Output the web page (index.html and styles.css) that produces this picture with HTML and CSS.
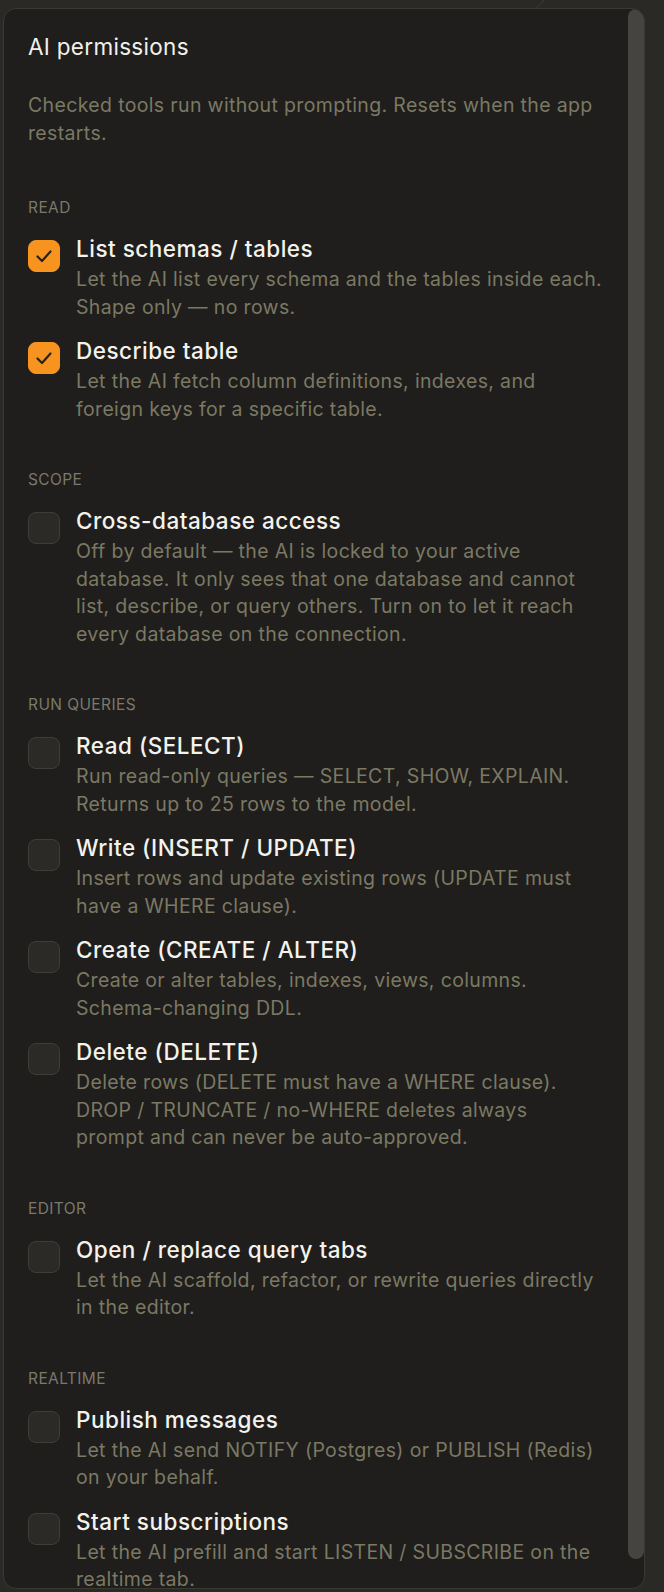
FILE: index.html
```html
<!DOCTYPE html>
<html lang="en">
    <head>
        <meta charset="UTF-8" />
        <meta name="viewport" content="width=device-width, initial-scale=1.0" />
        <title>AI permissions</title>
        <link rel="stylesheet" href="styles.css">
    </head>
    <body>
        <div class="backdrop">
            <div class="arc"></div>
            <section class="panel">
                <div class="thumb"></div>
                <div class="content">
                    <h1 class="title">AI permissions</h1>
                    <p class="intro">Checked tools run without prompting. Resets when the app restarts.</p>

                    <div class="group">
                        <h2 class="group-name">Read</h2>
                        <label class="perm">
                            <input type="checkbox" checked />
                            <span class="box"><svg viewBox="0 0 32 32"><polyline points="9.5,16.5 14,21 22.5,11.5" /></svg></span>
                            <span class="text">
                                <span class="name">List schemas / tables</span>
                                <span class="desc">Let the AI list every schema and the tables inside each. Shape only — no rows.</span>
                            </span>
                        </label>
                        <label class="perm">
                            <input type="checkbox" checked />
                            <span class="box"><svg viewBox="0 0 32 32"><polyline points="9.5,16.5 14,21 22.5,11.5" /></svg></span>
                            <span class="text">
                                <span class="name">Describe table</span>
                                <span class="desc">Let the AI fetch column definitions, indexes, and foreign keys for a specific table.</span>
                            </span>
                        </label>
                    </div>

                    <div class="group">
                        <h2 class="group-name">Scope</h2>
                        <label class="perm">
                            <input type="checkbox" />
                            <span class="box"></span>
                            <span class="text">
                                <span class="name">Cross-database access</span>
                                <span class="desc">Off by default — the AI is locked to your active database. It only sees that one database and cannot list, describe, or query others. Turn on to let it reach every database on the connection.</span>
                            </span>
                        </label>
                    </div>

                    <div class="group">
                        <h2 class="group-name">Run queries</h2>
                        <label class="perm">
                            <input type="checkbox" />
                            <span class="box"></span>
                            <span class="text">
                                <span class="name">Read (SELECT)</span>
                                <span class="desc">Run read-only queries — SELECT, SHOW, EXPLAIN. Returns up to 25 rows to the model.</span>
                            </span>
                        </label>
                        <label class="perm">
                            <input type="checkbox" />
                            <span class="box"></span>
                            <span class="text">
                                <span class="name">Write (INSERT / UPDATE)</span>
                                <span class="desc">Insert rows and update existing rows (UPDATE must have a WHERE clause).</span>
                            </span>
                        </label>
                        <label class="perm">
                            <input type="checkbox" />
                            <span class="box"></span>
                            <span class="text">
                                <span class="name">Create (CREATE / ALTER)</span>
                                <span class="desc">Create or alter tables, indexes, views, columns. Schema-changing DDL.</span>
                            </span>
                        </label>
                        <label class="perm">
                            <input type="checkbox" />
                            <span class="box"></span>
                            <span class="text">
                                <span class="name">Delete (DELETE)</span>
                                <span class="desc">Delete rows (DELETE must have a WHERE clause). DROP / TRUNCATE / no-WHERE deletes always prompt&nbsp;and can never be auto-approved.</span>
                            </span>
                        </label>
                    </div>

                    <div class="group">
                        <h2 class="group-name">Editor</h2>
                        <label class="perm">
                            <input type="checkbox" />
                            <span class="box"></span>
                            <span class="text">
                                <span class="name">Open / replace query tabs</span>
                                <span class="desc">Let the AI scaffold, refactor, or rewrite queries directly in the editor.</span>
                            </span>
                        </label>
                    </div>

                    <div class="group">
                        <h2 class="group-name">Realtime</h2>
                        <label class="perm">
                            <input type="checkbox" />
                            <span class="box"></span>
                            <span class="text">
                                <span class="name">Publish messages</span>
                                <span class="desc">Let the AI send NOTIFY (Postgres) or PUBLISH (Redis) on your behalf.</span>
                            </span>
                        </label>
                        <label class="perm">
                            <input type="checkbox" />
                            <span class="box"></span>
                            <span class="text">
                                <span class="name">Start subscriptions</span>
                                <span class="desc">Let the AI prefill and start LISTEN / SUBSCRIBE on the realtime tab.</span>
                            </span>
                        </label>
                    </div>
                </div>
            </section>
        </div>
    </body>
</html>
```

FILE: styles.css
```css
* {
    margin: 0;
    padding: 0;
    box-sizing: border-box;
}

body {
    background: #2a2925;
    font-family: Inter, "Noto Sans", sans-serif;
    overflow: hidden;
}

.backdrop {
    position: relative;
    height: 100vh;
    padding: 8px 19px 0 3px;
}

/* faint edge of something behind the popover */
.arc {
    position: absolute;
    top: -40px;
    left: 380px;
    width: 180px;
    height: 60px;
    border-right: 1px solid #4a4943;
    border-radius: 0 0 60px 0;
}

.panel {
    position: relative;
    height: 1581px;
    background: #1f1e1c;
    border: 1px solid #3a3934;
    border-radius: 13px;
    overflow: hidden;
}

.thumb {
    position: absolute;
    top: 0;
    right: 0;
    width: 16px;
    height: 1550px;
    background: #454440;
    border-radius: 8px;
}

.content {
    padding: 26px 38px 0 24px;
}

.title {
    font-size: 22.5px;
    font-weight: 400;
    line-height: 24px;
    letter-spacing: 0.3px;
    color: #f1f0ea;
}

.intro {
    margin-top: 33px;
    font-size: 19.5px;
    line-height: 27.5px;
    letter-spacing: 0.35px;
    color: #7b7963;
}

.group {
    margin-top: 47px;

    &:first-of-type {
        margin-top: 51px;
    }
}

.group-name {
    font-size: 15.5px;
    font-weight: 400;
    line-height: 20px;
    letter-spacing: 0.4px;
    text-transform: uppercase;
    color: #7a796b;
    margin-bottom: 17px;
}

.perm {
    display: flex;
    gap: 16px;
    align-items: flex-start;

    & + .perm {
        margin-top: 16px;
    }

    input {
        display: none;
    }

    .box {
        flex: none;
        width: 32px;
        height: 32px;
        margin-top: 5px;
        border-radius: 8px;
        background: #2b2a27;
        border: 1px solid #3e3d38;
    }

    input:checked + .box {
        background: #f7931f;
        border-color: #f7931f;
    }

    svg {
        display: block;
        margin: -1px;
        width: 32px;
        height: 32px;
        fill: none;
        stroke: #2a2217;
        stroke-width: 2.2;
        stroke-linecap: round;
        stroke-linejoin: round;
    }
}

.text {
    display: flex;
    flex-direction: column;
    gap: 3px;
}

.name {
    font-size: 22.5px;
    font-weight: 500;
    line-height: 28px;
    letter-spacing: 0.5px;
    color: #f3f2ed;
}

.desc {
    font-size: 19.5px;
    line-height: 27.5px;
    letter-spacing: 0.35px;
    color: #7b7963;
    text-wrap: pretty;
}
```
